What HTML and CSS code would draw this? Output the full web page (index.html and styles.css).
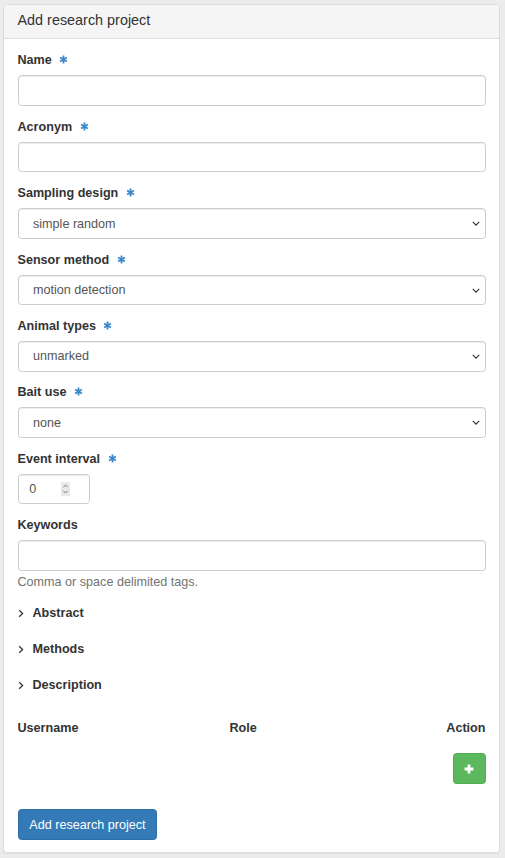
FILE: index.html
```html
<!DOCTYPE html>
<html lang="en">
<head>
<meta charset="utf-8">
<title>Add research project</title>
<link rel="stylesheet" href="styles.css">
</head>
<body>
<div class="panel">
  <div class="panel-heading">Add research project</div>
  <div class="panel-body">
    <div class="form-group">
      <label class="control-label">Name <svg class="req" viewBox="0 0 10 10"><path d="M5 0.6V9.4M1.2 2.8L8.8 7.2M1.2 7.2L8.8 2.8"/></svg></label>
      <input class="form-control" type="text">
    </div>
    <div class="form-group">
      <label class="control-label">Acronym <svg class="req" viewBox="0 0 10 10"><path d="M5 0.6V9.4M1.2 2.8L8.8 7.2M1.2 7.2L8.8 2.8"/></svg></label>
      <input class="form-control" type="text">
    </div>
    <div class="form-group">
      <label class="control-label">Sampling design <svg class="req" viewBox="0 0 10 10"><path d="M5 0.6V9.4M1.2 2.8L8.8 7.2M1.2 7.2L8.8 2.8"/></svg></label>
      <div class="select-wrap">
        <select class="form-control"><option>simple random</option></select>
        <svg class="caret" viewBox="0 0 10 6"><path d="M1 1L5 5L9 1"/></svg>
      </div>
    </div>
    <div class="form-group">
      <label class="control-label">Sensor method <svg class="req" viewBox="0 0 10 10"><path d="M5 0.6V9.4M1.2 2.8L8.8 7.2M1.2 7.2L8.8 2.8"/></svg></label>
      <div class="select-wrap">
        <select class="form-control"><option>motion detection</option></select>
        <svg class="caret" viewBox="0 0 10 6"><path d="M1 1L5 5L9 1"/></svg>
      </div>
    </div>
    <div class="form-group">
      <label class="control-label">Animal types <svg class="req" viewBox="0 0 10 10"><path d="M5 0.6V9.4M1.2 2.8L8.8 7.2M1.2 7.2L8.8 2.8"/></svg></label>
      <div class="select-wrap">
        <select class="form-control"><option>unmarked</option></select>
        <svg class="caret" viewBox="0 0 10 6"><path d="M1 1L5 5L9 1"/></svg>
      </div>
    </div>
    <div class="form-group">
      <label class="control-label">Bait use <svg class="req" viewBox="0 0 10 10"><path d="M5 0.6V9.4M1.2 2.8L8.8 7.2M1.2 7.2L8.8 2.8"/></svg></label>
      <div class="select-wrap">
        <select class="form-control"><option>none</option></select>
        <svg class="caret" viewBox="0 0 10 6"><path d="M1 1L5 5L9 1"/></svg>
      </div>
    </div>
    <div class="form-group">
      <label class="control-label">Event interval <svg class="req" viewBox="0 0 10 10"><path d="M5 0.6V9.4M1.2 2.8L8.8 7.2M1.2 7.2L8.8 2.8"/></svg></label>
      <div class="number-box">
        <input class="number-input" type="text" value="0">
        <span class="spinner">
          <svg viewBox="0 0 9 14"><path d="M2.3 5.2L4.5 3L6.7 5.2M2.3 8.8L4.5 11L6.7 8.8"/></svg>
        </span>
      </div>
    </div>
    <div class="form-group last">
      <label class="control-label">Keywords</label>
      <input class="form-control" type="text">
      <p class="help-block">Comma or space delimited tags.</p>
    </div>
    <div class="collapse-row">
      <svg class="chev" viewBox="0 0 6 9"><path d="M1.2 1.2L4.6 4.5L1.2 7.8"/></svg>
      <span>Abstract</span>
    </div>
    <div class="collapse-row">
      <svg class="chev" viewBox="0 0 6 9"><path d="M1.2 1.2L4.6 4.5L1.2 7.8"/></svg>
      <span>Methods</span>
    </div>
    <div class="collapse-row">
      <svg class="chev" viewBox="0 0 6 9"><path d="M1.2 1.2L4.6 4.5L1.2 7.8"/></svg>
      <span>Description</span>
    </div>
    <div class="members-head">
      <span>Username</span>
      <span>Role</span>
      <span class="th-action">Action</span>
    </div>
    <div class="members-actions">
      <button class="btn btn-success" type="button" aria-label="Add member">
        <svg viewBox="0 0 10 10"><path d="M5 0.6V9.4M0.6 5H9.4"/></svg>
      </button>
    </div>
    <div class="submit-row">
      <button class="btn btn-primary" type="submit">Add research project</button>
    </div>
  </div>
</div>
</body>
</html>
```

FILE: styles.css
```css
* { box-sizing: border-box; }

html, body {
  margin: 0;
  padding: 0;
}

body {
  background: #ececec;
  font-family: "Liberation Sans", Arial, Helvetica, sans-serif;
  font-size: 12.6px;
  line-height: 18px;
  color: #333;
  padding: 4px 5px 4px 3px;
}

.panel {
  background: #fff;
  border: 1px solid #ddd;
  border-radius: 3.6px;
  box-shadow: 0 1px 1px rgba(0, 0, 0, 0.05);
}

.panel-heading {
  background: #f5f5f5;
  border-bottom: 1px solid #ddd;
  border-radius: 3px 3px 0 0;
  padding: 8px 13.5px 9px;
  font-size: 14.4px;
  line-height: 15.84px;
  color: #333;
}

.panel-body {
  padding: 12.5px 13.5px 12.5px;
  display: flex;
  flex-direction: column;
}

.form-group {
  margin-bottom: 11.83px;
}

.form-group.last {
  margin-bottom: 0;
}

.control-label {
  display: block;
  font-weight: bold;
  line-height: 18px;
  height: 18px;
  margin-bottom: 6px;
}

.req {
  width: 9px;
  height: 9px;
  margin-left: 4px;
  vertical-align: 0px;
  fill: none;
  stroke: #3a87c9;
  stroke-width: 2;
}

.form-control {
  display: block;
  width: 100%;
  height: 30.6px;
  padding: 5.4px 10.8px;
  font-family: inherit;
  font-size: 12.6px;
  line-height: 18px;
  color: #555;
  background: #fff;
  border: 1px solid #ccc;
  border-radius: 3.6px;
  box-shadow: inset 0 1px 1px rgba(0, 0, 0, 0.075);
  margin: 0;
}

select.form-control {
  appearance: none;
  -webkit-appearance: none;
  padding-left: 14.5px;
}

.select-wrap {
  position: relative;
}

.caret {
  position: absolute;
  right: 6px;
  top: 13px;
  width: 8px;
  height: 5px;
  fill: none;
  stroke: #333;
  stroke-width: 1.5;
  pointer-events: none;
}

.number-box {
  display: flex;
  align-items: center;
  width: 72px;
  height: 30.6px;
  border: 1px solid #ccc;
  border-radius: 3.6px;
  box-shadow: inset 0 1px 1px rgba(0, 0, 0, 0.075);
  padding: 0 19px 0 10.8px;
}

.number-input {
  flex: 1;
  min-width: 0;
  border: 0;
  padding: 0;
  margin: 0;
  font-family: inherit;
  font-size: 12.6px;
  color: #555;
  background: transparent;
  outline: none;
}

.spinner {
  display: block;
  width: 9px;
  height: 14px;
  background: #e9e9ed;
}

.spinner svg {
  display: block;
  width: 9px;
  height: 14px;
  fill: none;
  stroke: #777;
  stroke-width: 1;
}

.help-block {
  margin: 2px 0 3.4px;
  color: #737373;
  line-height: 18px;
}

.collapse-row {
  display: flex;
  align-items: center;
  height: 36px;
  gap: 9px;
  font-weight: bold;
  padding-top: 1px;
}

.chev {
  width: 6px;
  height: 9px;
  fill: none;
  stroke: #333;
  stroke-width: 1.3;
  margin-top: 2px;
}

.members-head {
  display: grid;
  grid-template-columns: 212px 1fr auto;
  margin-top: 17px;
  font-weight: bold;
  line-height: 18px;
}

.th-action {
  text-align: right;
}

.members-actions {
  display: flex;
  justify-content: flex-end;
  margin-top: 16px;
}

.btn {
  display: inline-flex;
  align-items: center;
  justify-content: center;
  font-family: inherit;
  font-size: 12.6px;
  line-height: 18px;
  border: 1px solid transparent;
  border-radius: 3.6px;
  height: 30.6px;
  cursor: pointer;
  margin: 0;
}

.btn-success {
  width: 33px;
  background: #5cb85c;
  border-color: #4cae4c;
  padding: 0;
}

.btn-success svg {
  width: 10px;
  height: 10px;
  fill: none;
  stroke: #fff;
  stroke-width: 2.8;
}

.submit-row {
  margin-top: 25.4px;
}

.btn-primary {
  background: #337ab7;
  border-color: #2e6da4;
  color: #fff;
  padding: 5.4px 10.8px;
}
```
